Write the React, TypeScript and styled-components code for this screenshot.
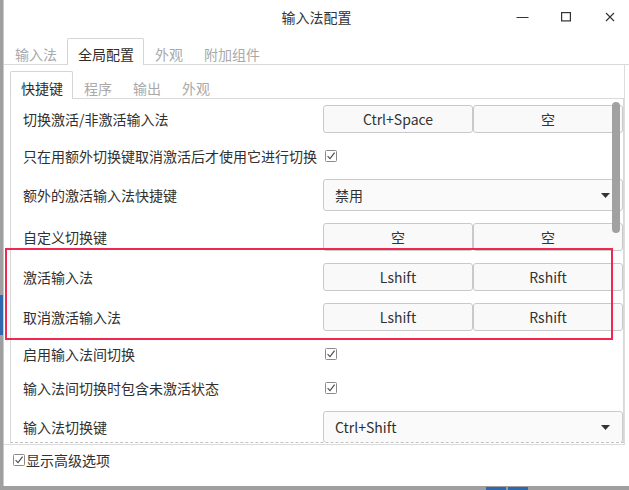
import React from "react";
import styled, { createGlobalStyle } from "styled-components";

const FONT = `"Noto Sans CJK SC", "Noto Sans", "DejaVu Sans", sans-serif`;

const GlobalStyle = createGlobalStyle`
  html, body { margin: 0; padding: 0; }
  body {
    width: 629px;
    height: 490px;
    overflow: hidden;
    background: #9d9d9d;
    font-family: ${FONT};
  }
`;

const Desktop = styled.div`
  position: relative;
  width: 629px;
  height: 490px;
  overflow: hidden;
  box-sizing: border-box;
  padding-left: 3px;
  background: #9f9f9f;
`;

const DesktopBit = styled.div`
  position: absolute;
  background: #2f68ad;
`;

const Window = styled.div`
  width: 626px;
  height: 486px;
  box-sizing: border-box;
  background: #ffffff;
  border-left: 1px solid #c9c9c9;
  display: flex;
  flex-direction: column;
  font-family: ${FONT};
  font-size: 14px;
  color: #303030;
`;

const TitleBar = styled.div`
  height: 38px;
  box-sizing: border-box;
  padding-bottom: 4px;
  display: grid;
  grid-template-columns: 1fr auto 1fr;
  align-items: center;
`;

const Title = styled.div`
  grid-column: 2;
  font-size: 14px;
  line-height: 20px;
  color: #333333;
`;

const Controls = styled.div`
  grid-column: 3;
  justify-self: end;
  display: flex;
  gap: 14px;
  padding-right: 4px;
`;

const ControlButton = styled.div`
  width: 30px;
  height: 20px;
  display: flex;
  align-items: center;
  justify-content: center;
`;

const TabBar = styled.div<{ $h: number; $w?: number }>`
  display: flex;
  align-items: flex-end;
  height: ${(p) => p.$h}px;
  ${(p) => (p.$w ? `width: ${p.$w}px;` : "")}
  box-sizing: border-box;
  border-bottom: 1px solid #dadada;
`;

const Tab = styled.div<{ $active?: boolean; $h: number; $pt: number }>`
  height: ${(p) => p.$h}px;
  margin-bottom: -1px;
  box-sizing: border-box;
  display: flex;
  align-items: center;
  padding: ${(p) => p.$pt}px 9px 0 10px;
  border: 1px solid ${(p) => (p.$active ? "#d5d5d5" : "transparent")};
  border-bottom: none;
  border-radius: 2px 2px 0 0;
  background: ${(p) => (p.$active ? "#ffffff" : "transparent")};
  color: ${(p) => (p.$active ? "#2e2e2e" : "#a9a9a9")};
  font-size: 14px;
  line-height: 20px;
  white-space: nowrap;
`;

const OuterPanel = styled.div`
  width: 621px;
  box-sizing: border-box;
  padding: 6px 0 1px 6px;
  border-right: 1px solid #dcdcdc;
  border-bottom: 1px solid #dcdcdc;
`;

const InnerPanel = styled.div`
  width: 614px;
  box-sizing: border-box;
  border-left: 1px solid #d8d8d8;
  border-right: 1px solid #d8d8d8;
  border-bottom: 1px dashed #c2c2c2;
`;

const Viewport = styled.div`
  position: relative;
  height: 343px;
  overflow: hidden;
`;

const Form = styled.div`
  display: grid;
  grid-template-columns: 300px 1fr;
  row-gap: 12px;
  align-items: center;
  padding: 6px 0 0 12px;
`;

const Label = styled.div`
  font-size: 14px;
  line-height: 20px;
  color: #303030;
  white-space: nowrap;
`;

const ButtonPair = styled.div`
  display: grid;
  grid-template-columns: 1fr 1fr;
  height: 28px;
`;

const KeyButton = styled.div`
  box-sizing: border-box;
  height: 28px;
  display: flex;
  align-items: center;
  justify-content: center;
  border: 1px solid #c9c9c9;
  border-radius: 3px;
  background: #f9f9f9;
  color: #333333;
  font-size: 14px;
  line-height: 20px;
`;

const Combo = styled.div`
  box-sizing: border-box;
  height: 32px;
  display: flex;
  align-items: center;
  justify-content: space-between;
  padding: 0 12px 0 11px;
  border: 1px solid #cbcbcb;
  border-radius: 3px;
  background: #fafafa;
  color: #303030;
  font-size: 14px;
  line-height: 20px;
`;

const CheckCell = styled.div`
  height: 22px;
  display: flex;
  align-items: center;
  padding-left: 2px;
`;

const Scrollbar = styled.div`
  position: absolute;
  left: 601px;
  top: 3px;
  width: 8px;
  height: 131px;
  border-radius: 4px;
  background: #a1a1a1;
`;

const Footer = styled.div`
  height: 22px;
  margin-top: 4px;
  padding-left: 9px;
  display: flex;
  align-items: center;
  gap: 1px;
  font-size: 14px;
  line-height: 20px;
  color: #303030;
`;

const Highlight = styled.div`
  position: absolute;
  left: 5px;
  top: 248px;
  width: 608px;
  height: 92px;
  box-sizing: border-box;
  border: 2px solid #f0284f;
  pointer-events: none;
`;

const CheckIcon = () => (
  <svg width="12" height="12" viewBox="0 0 12 12">
    <rect x="0.5" y="0.5" width="11" height="11" rx="1" fill="#ffffff" stroke="#8a8a8a" strokeWidth="1" />
    <path d="M2.6 6.2 L5 8.6 L9.6 2.6" fill="none" stroke="#4a4a4a" strokeWidth="1.1" />
  </svg>
);

const Arrow = () => (
  <svg width="9" height="5" viewBox="0 0 9 5">
    <path d="M0 0 H9 L4.5 5 Z" fill="#333333" />
  </svg>
);

type Row =
  | { label: string; kind: "pair"; a: string; b: string }
  | { label: string; kind: "check" }
  | { label: string; kind: "combo"; value: string };

const rows: Row[] = [
  { label: "切换激活/非激活输入法", kind: "pair", a: "Ctrl+Space", b: "空" },
  { label: "只在用额外切换键取消激活后才使用它进行切换", kind: "check" },
  { label: "额外的激活输入法快捷键", kind: "combo", value: "禁用" },
  { label: "自定义切换键", kind: "pair", a: "空", b: "空" },
  { label: "激活输入法", kind: "pair", a: "Lshift", b: "Rshift" },
  { label: "取消激活输入法", kind: "pair", a: "Lshift", b: "Rshift" },
  { label: "启用输入法间切换", kind: "check" },
  { label: "输入法间切换时包含未激活状态", kind: "check" },
  { label: "输入法切换键", kind: "combo", value: "Ctrl+Shift" },
];

const outerTabs = ["输入法", "全局配置", "外观", "附加组件"];
const innerTabs = ["快捷键", "程序", "输出", "外观"];

export default function App() {
  return (
    <>
      <GlobalStyle />
      <Desktop>
        <Window>
          <TitleBar>
            <Title>输入法配置</Title>
            <Controls>
              <ControlButton>
                <svg width="13" height="10" viewBox="0 0 13 10">
                  <path d="M0.5 5.5 H12.5" stroke="#333" strokeWidth="1" />
                </svg>
              </ControlButton>
              <ControlButton>
                <svg width="10" height="10" viewBox="0 0 10 10">
                  <rect x="0.6" y="0.6" width="8.8" height="8.3" fill="none" stroke="#333" strokeWidth="1.2" />
                </svg>
              </ControlButton>
              <ControlButton>
                <svg width="10" height="10" viewBox="0 0 10 10">
                  <path d="M1 1 L9 9 M9 1 L1 9" stroke="#333" strokeWidth="1.1" />
                </svg>
              </ControlButton>
            </Controls>
          </TitleBar>

          <TabBar $h={27}>
            {outerTabs.map((t) => (
              <Tab key={t} $h={27} $pt={3} $active={t === "全局配置"}>
                {t}
              </Tab>
            ))}
          </TabBar>

          <OuterPanel>
            <TabBar $h={28} $w={614}>
              {innerTabs.map((t) => (
                <Tab key={t} $h={28} $pt={5} $active={t === "快捷键"}>
                  {t}
                </Tab>
              ))}
            </TabBar>
            <InnerPanel>
              <Viewport>
                <Form>
                  {rows.map((r, i) => (
                    <React.Fragment key={i}>
                      <Label>{r.label}</Label>
                      {r.kind === "pair" && (
                        <ButtonPair>
                          <KeyButton>{r.a}</KeyButton>
                          <KeyButton>{r.b}</KeyButton>
                        </ButtonPair>
                      )}
                      {r.kind === "check" && (
                        <CheckCell>
                          <CheckIcon />
                        </CheckCell>
                      )}
                      {r.kind === "combo" && (
                        <Combo>
                          <span>{r.value}</span>
                          <Arrow />
                        </Combo>
                      )}
                    </React.Fragment>
                  ))}
                </Form>
                <Scrollbar />
              </Viewport>
            </InnerPanel>
          </OuterPanel>

          <Footer>
            <CheckIcon />
            <span>显示高级选项</span>
          </Footer>
        </Window>

        <DesktopBit style={{ left: 0, top: 295, width: 3, height: 40 }} />
        <DesktopBit style={{ left: 486, top: 487, width: 20, height: 3 }} />
        <DesktopBit style={{ left: 508, top: 487, width: 20, height: 3 }} />
        <Highlight />
      </Desktop>
    </>
  );
}
